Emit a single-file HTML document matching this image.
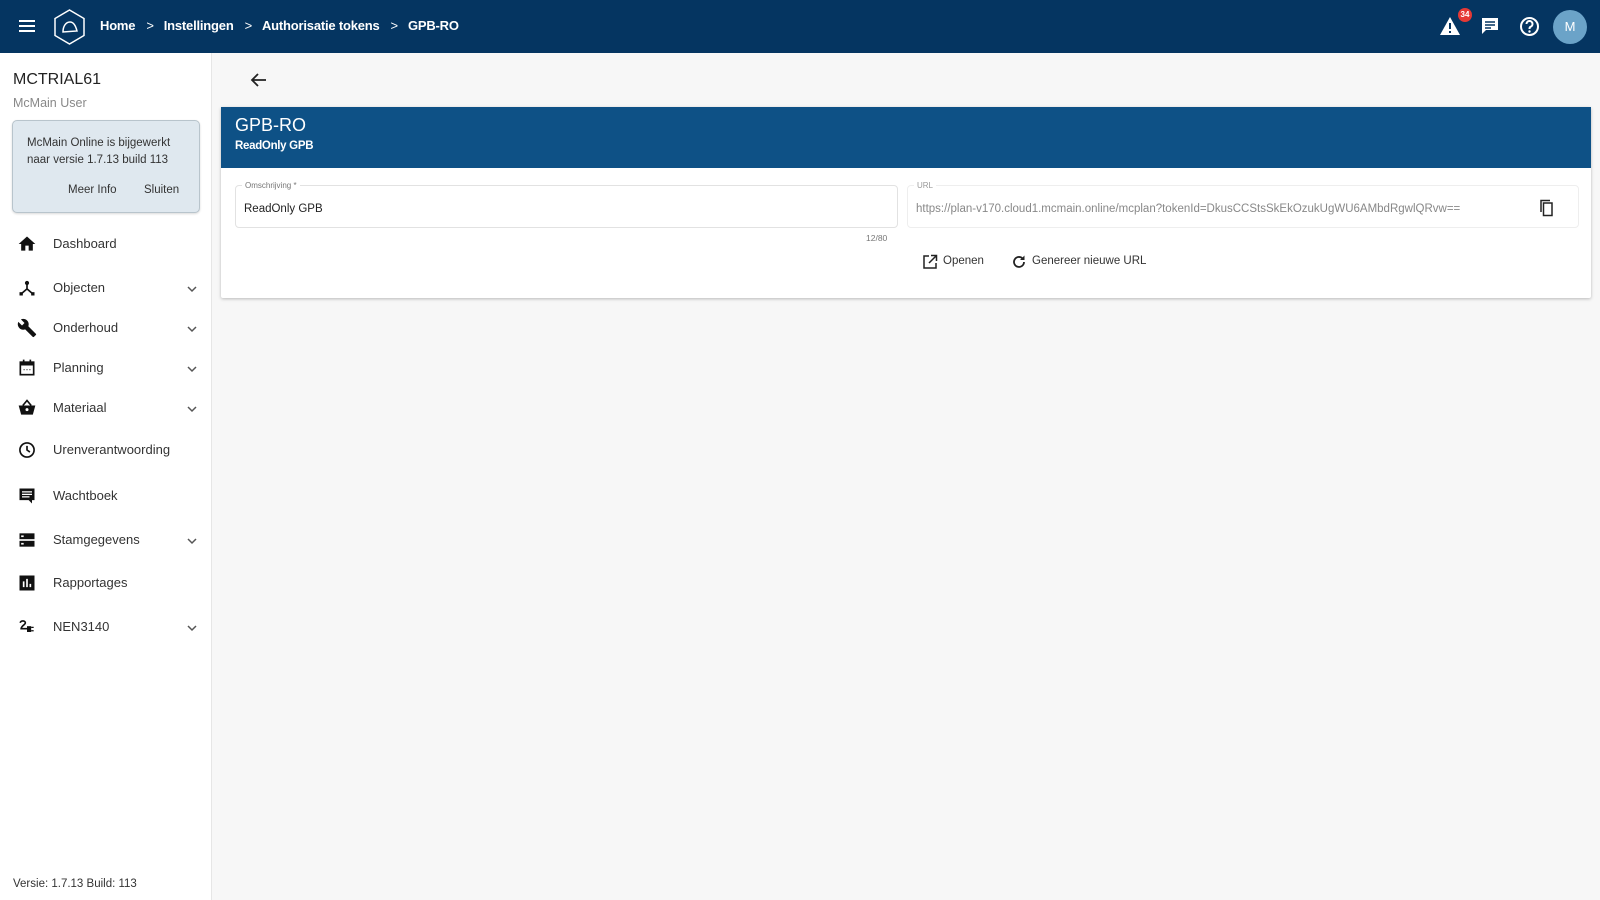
<!DOCTYPE html>
<html><head><meta charset="utf-8"><style>
*{box-sizing:border-box;margin:0;padding:0}
body{width:1600px;height:900px;overflow:hidden;background:#f7f7f7;font-family:"Liberation Sans",sans-serif;color:#222;position:relative}
.hdr{position:absolute;left:0;top:0;width:1600px;height:53px;background:#053561;color:#fff}
.side{position:absolute;left:0;top:53px;width:212px;height:847px;background:#fff;border-right:1px solid #e6e6e6}
.abs{position:absolute}
.nav{position:absolute;left:0;width:212px;height:20px;font-size:13px;color:#333}
.nav span{position:absolute;left:53px;top:2px}
.nav svg.ic{position:absolute;left:17px;top:0}
.nav .chev{position:absolute;left:187px;top:8px}
.sep{display:inline-block;margin:0 10px 0 11px;font-weight:normal}
</style></head><body>
<div class="hdr">
<svg class="abs" style="left:17px;top:17px" width="20" height="18" viewBox="0 0 20 18"><path d="M2 4h16M2 9h16M2 14h16" stroke="#fff" stroke-width="2"/></svg>
<svg class="abs" style="left:53px;top:8px" width="33" height="38" viewBox="0 0 33 38"><path d="M16.5 2L31 10.5v17L16.5 36 2 27.5v-17z" fill="none" stroke="#fff" stroke-width="1.5"/><path d="M10 24c0-6 3-10 7-10 4 0 6 5 7 9z" fill="none" stroke="#fff" stroke-width="1.5"/></svg>
<div class="abs" style="left:100px;top:18px;font-size:13px;font-weight:bold;white-space:nowrap;letter-spacing:-0.2px">Home<span class="sep">&gt;</span>Instellingen<span class="sep">&gt;</span>Authorisatie tokens<span class="sep">&gt;</span>GPB-RO</div>
<svg class="abs" style="left:1439px;top:16px" width="22" height="20" viewBox="0 0 22 20"><path d="M11 1L21 19H1z" fill="#fff"/><path d="M11 7v6M11 15v2" stroke="#053561" stroke-width="2"/></svg>
<div class="abs" style="left:1458px;top:8px;width:14px;height:14px;border-radius:7px;background:#e53935;color:#fff;font-size:8px;font-weight:bold;text-align:center;line-height:14px">34</div>
<svg class="abs" style="left:1480px;top:16px" width="20" height="20" viewBox="0 0 20 20"><path d="M2 2h16v12H6l-4 4z" fill="#fff"/><path d="M5 6h10M5 9h10M5 12h6" stroke="#053561" stroke-width="1.5"/></svg>
<svg class="abs" style="left:1519px;top:16px" width="21" height="21" viewBox="0 0 21 21"><circle cx="10.5" cy="10.5" r="8.5" fill="none" stroke="#fff" stroke-width="2"/><path d="M7.5 8a3 3 0 1 1 4 2.8c-1 .5-1 1-1 2.2" fill="none" stroke="#fff" stroke-width="2"/><circle cx="10.5" cy="15.5" r="1.2" fill="#fff"/></svg>
<div class="abs" style="left:1553px;top:10px;width:34px;height:34px;border-radius:17px;background:#6ba3c8;color:#fff;font-size:13px;text-align:center;line-height:34px">M</div>
</div>

<div class="side">
<div class="abs" style="left:13px;top:18px;font-size:16px;color:#222">MCTRIAL61</div>
<div class="abs" style="left:13px;top:43px;font-size:12.5px;color:#888">McMain User</div>
<div class="abs" style="left:12px;top:67px;width:188px;height:93px;background:#dfe8ef;border:1px solid #b8c4cc;border-radius:5px;box-shadow:0 1px 2px rgba(0,0,0,.15)">
<div class="abs" style="left:14px;top:14px;font-size:11.5px;line-height:17px;color:#333">McMain Online is bijgewerkt<br>naar versie 1.7.13 build 113</div>
<div class="abs" style="left:55px;top:63px;font-size:11.5px;color:#333">Meer Info</div>
<div class="abs" style="left:131px;top:63px;font-size:11.5px;color:#333">Sluiten</div>
</div>
</div>
<svg width="0" height="0" style="position:absolute"><defs><path id="ch" d="M1 1l4 4 4-4" fill="none" stroke="#555" stroke-width="1.5"/></defs></svg>
<div class="nav" style="top:234px"><svg class="ic" width="20" height="20" viewBox="0 0 24 24"><path d="M10 20v-6h4v6h5v-8h3L12 3 2 12h3v8z" fill="#111"/></svg><span>Dashboard</span></div>
<div class="nav" style="top:278px"><svg class="ic" width="20" height="20" viewBox="0 0 24 24"><circle cx="12" cy="6" r="2.5" fill="#111"/><path d="M12 8v5L5 19M12 13l7 6" stroke="#111" stroke-width="2" fill="none"/><rect x="3" y="17" width="4" height="4" fill="#111"/><rect x="17" y="17" width="4" height="4" fill="#111"/></svg><span>Objecten</span><svg class="chev" width="10" height="7"><use href="#ch"/></svg></div>
<div class="nav" style="top:318px"><svg class="ic" width="20" height="20" viewBox="0 0 24 24"><path d="M22.7 19l-9.1-9.1c.9-2.3.4-5-1.5-6.9-2-2-5-2.4-7.4-1.3L9 6 6 9 1.6 4.7C.4 7.100.9 10.1 2.9 12.1c1.9 1.9 4.6 2.4 6.9 1.5l9.1 9.1c.4.4 1 .4 1.4 0l2.3-2.3c.5-.4.5-1.1.1-1.4z" fill="#111"/></svg><span>Onderhoud</span><svg class="chev" width="10" height="7"><use href="#ch"/></svg></div>
<div class="nav" style="top:358px"><svg class="ic" width="20" height="20" viewBox="0 0 24 24"><rect x="4" y="5" width="16" height="15" fill="none" stroke="#111" stroke-width="2"/><path d="M4 5h16v4H4z" fill="#111"/><path d="M8 2v4M16 2v4" stroke="#111" stroke-width="2"/><path d="M8 14h1M11.5 14h1M15 14h1" stroke="#111" stroke-width="1.5"/></svg><span>Planning</span><svg class="chev" width="10" height="7"><use href="#ch"/></svg></div>
<div class="nav" style="top:398px"><svg class="ic" width="20" height="20" viewBox="0 0 24 24"><path d="M2 9h20l-3 11H5z" fill="#111"/><path d="M7 9l5-6 5 6" stroke="#111" stroke-width="2" fill="none"/><circle cx="12" cy="14" r="1.8" fill="#fff"/></svg><span>Materiaal</span><svg class="chev" width="10" height="7"><use href="#ch"/></svg></div>
<div class="nav" style="top:440px"><svg class="ic" width="20" height="20" viewBox="0 0 24 24"><circle cx="12" cy="12" r="8.5" fill="none" stroke="#111" stroke-width="2"/><path d="M12 7v5l3.5 2.5" stroke="#111" stroke-width="2" fill="none"/></svg><span>Urenverantwoording</span></div>
<div class="nav" style="top:486px"><svg class="ic" width="20" height="20" viewBox="0 0 24 24"><path d="M3 3h18v14H3z M18 17v4l-4-4z" fill="#111"/><path d="M6 7h12M6 10h12M6 13h9" stroke="#fff" stroke-width="1.5"/></svg><span>Wachtboek</span></div>
<div class="nav" style="top:530px"><svg class="ic" width="20" height="20" viewBox="0 0 24 24"><rect x="3" y="4" width="18" height="7" fill="#111"/><rect x="3" y="13" width="18" height="7" fill="#111"/><rect x="5" y="6.5" width="3" height="2" fill="#fff"/><rect x="5" y="15.5" width="3" height="2" fill="#fff"/></svg><span>Stamgegevens</span><svg class="chev" width="10" height="7"><use href="#ch"/></svg></div>
<div class="nav" style="top:573px"><svg class="ic" width="20" height="20" viewBox="0 0 24 24"><rect x="3" y="3" width="18" height="18" fill="#111"/><path d="M8 10v7M12 7v10M16 13v4" stroke="#fff" stroke-width="2"/></svg><span>Rapportages</span></div>
<div class="nav" style="top:617px"><svg class="ic" width="20" height="20" viewBox="0 0 24 24"><path d="M4 7c0-3 6-3 6 0 0 2-5 4-5 7h5M9 14h6" stroke="#111" stroke-width="2" fill="none"/><path d="M12 11h5v7h-5z" fill="#111"/><path d="M17 12.5h3M17 16.5h3" stroke="#111" stroke-width="1.5"/></svg><span>NEN3140</span><svg class="chev" width="10" height="7"><use href="#ch"/></svg></div>
<div class="abs" style="left:13px;top:878px;font-size:11.5px;color:#333">Versie: 1.7.13 Build: 113</div>

<svg class="abs" style="left:250px;top:72px" width="18" height="16" viewBox="0 0 18 16"><path d="M16 8H3M8 2L2 8l6 6" stroke="#222" stroke-width="1.8" fill="none"/></svg>

<div class="abs" style="left:221px;top:107px;width:1370px;height:191px;background:#fff;box-shadow:0 1px 3px rgba(0,0,0,.25);border-radius:2px">
<div class="abs" style="left:0;top:0;width:1370px;height:61px;background:#0e5186;color:#fff">
<div class="abs" style="left:14px;top:8px;font-size:18px">GPB-RO</div>
<div class="abs" style="left:14px;top:33px;font-size:11.5px;font-weight:bold;letter-spacing:-0.3px">ReadOnly GPB</div>
</div>
<div class="abs" style="left:14px;top:78px;width:663px;height:43px;border:1px solid #e2e2e2;border-radius:4px">
<div class="abs" style="left:6px;top:-5px;background:#fff;padding:0 3px;font-size:8px;color:#777">Omschrijving *</div>
<div class="abs" style="left:8px;top:17px;font-size:11.5px;color:#222">ReadOnly GPB</div>
</div>
<div class="abs" style="left:645px;top:126px;font-size:8.5px;color:#777">12/80</div>
<div class="abs" style="left:686px;top:78px;width:672px;height:43px;border:1px solid #eee;border-radius:4px">
<div class="abs" style="left:6px;top:-5px;background:#fff;padding:0 3px;font-size:8px;color:#999">URL</div>
<div class="abs" style="left:8px;top:17px;font-size:11.5px;color:#888;white-space:nowrap">https://plan-v170.cloud1.mcmain.online/mcplan?tokenId=DkusCCStsSkEkOzukUgWU6AMbdRgwlQRvw==</div>
<svg class="abs" style="left:630px;top:13px" width="16" height="18" viewBox="0 0 16 18"><path d="M3 13V1.5h9" stroke="#222" stroke-width="1.5" fill="none"/><rect x="5.5" y="4" width="8.5" height="12.5" stroke="#222" stroke-width="1.5" fill="none"/></svg>
</div>
<svg class="abs" style="left:701px;top:147px" width="16" height="16" viewBox="0 0 16 16"><path d="M7 2H2v12h12V9M9 1.5h5.5V7M14.5 1.5L7 9" stroke="#222" stroke-width="1.5" fill="none"/></svg>
<div class="abs" style="left:722px;top:148px;font-size:11.5px;color:#333">Openen</div>
<svg class="abs" style="left:790px;top:147px" width="16" height="16" viewBox="0 0 16 16"><path d="M13 8a5 5 0 1 1-1.6-3.7" stroke="#222" stroke-width="1.8" fill="none"/><path d="M13.5 1.5v4.5H9z" fill="#222"/></svg>
<div class="abs" style="left:811px;top:148px;font-size:11.5px;color:#333">Genereer nieuwe URL</div>
</div>
</body></html>
